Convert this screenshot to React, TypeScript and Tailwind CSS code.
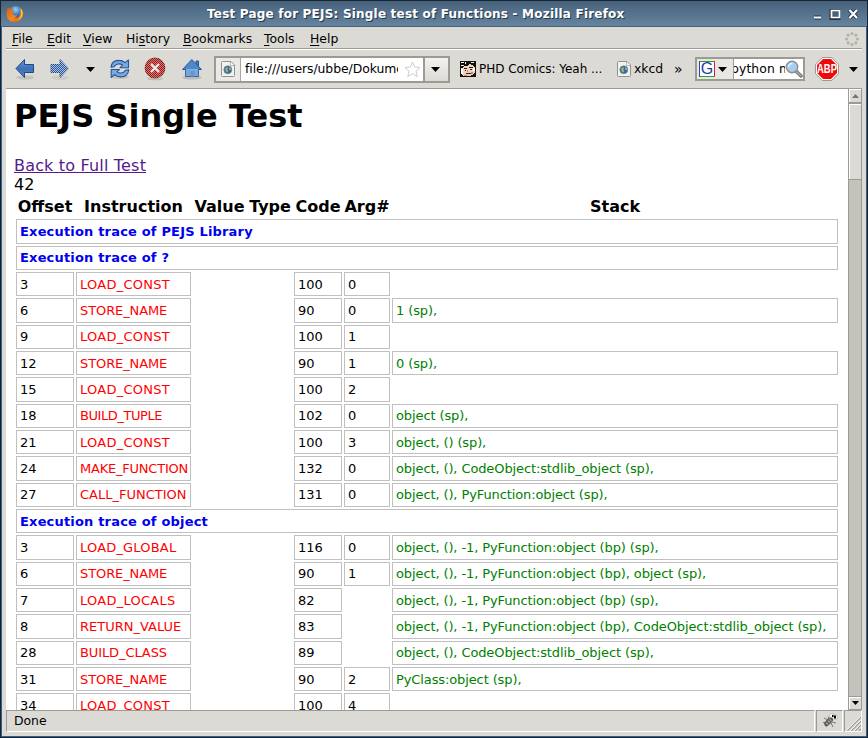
import React from "react";

type Row = { title?: string; c?: [string, string, string, string, string] };

const rows: Row[] = [
  { title: "Execution trace of PEJS Library" },
  { title: "Execution trace of ?" },
  { c: ["3", "LOAD_CONST", "100", "0", ""] },
  { c: ["6", "STORE_NAME", "90", "0", "1 (sp),"] },
  { c: ["9", "LOAD_CONST", "100", "1", ""] },
  { c: ["12", "STORE_NAME", "90", "1", "0 (sp),"] },
  { c: ["15", "LOAD_CONST", "100", "2", ""] },
  { c: ["18", "BUILD_TUPLE", "102", "0", "object (sp),"] },
  { c: ["21", "LOAD_CONST", "100", "3", "object, () (sp),"] },
  { c: ["24", "MAKE_FUNCTION", "132", "0", "object, (), CodeObject:stdlib_object (sp),"] },
  { c: ["27", "CALL_FUNCTION", "131", "0", "object, (), PyFunction:object (sp),"] },
  { title: "Execution trace of object" },
  { c: ["3", "LOAD_GLOBAL", "116", "0", "object, (), -1, PyFunction:object (bp) (sp),"] },
  { c: ["6", "STORE_NAME", "90", "1", "object, (), -1, PyFunction:object (bp), object (sp),"] },
  { c: ["7", "LOAD_LOCALS", "82", "", "object, (), -1, PyFunction:object (bp) (sp),"] },
  { c: ["8", "RETURN_VALUE", "83", "", "object, (), -1, PyFunction:object (bp), CodeObject:stdlib_object (sp),"] },
  { c: ["28", "BUILD_CLASS", "89", "", "object, (), CodeObject:stdlib_object (sp),"] },
  { c: ["31", "STORE_NAME", "90", "2", "PyClass:object (sp),"] },
  { c: ["34", "LOAD_CONST", "100", "4", ""] },
];

const opTracking: Record<string, string> = {
  LOAD_CONST: "tracking-[0.26px]",
  LOAD_LOCALS: "tracking-[0.26px]",
  LOAD_GLOBAL: "tracking-[0.18px]",
  STORE_NAME: "tracking-[-0.1px]",
  BUILD_TUPLE: "tracking-[-0.42px]",
  BUILD_CLASS: "tracking-[-0.1px]",
  MAKE_FUNCTION: "tracking-[-0.22px]",
};

const gridCols = "grid grid-cols-[58px_115px_53px_44px_48px_46px_446px] gap-x-[2px]";

function Cell({ text, color = "text-black" }: { text: string; color?: string }) {
  return (
    <div
      className={`flex h-[24.33px] items-center whitespace-nowrap border pl-[3px] text-[13px] leading-[15px] ${
        text ? "border-[#c0c0c0]" : "border-transparent"
      } ${color}`}
    >
      {text}
    </div>
  );
}

function Caret({ className = "" }: { className?: string }) {
  return (
    <svg className={`h-[5px] w-[9px] shrink-0 ${className}`} viewBox="0 0 9 5">
      <path d="M0 0h9L4.5 5z" fill="#000" />
    </svg>
  );
}

function FirefoxLogo() {
  return (
    <svg className="h-[18px] w-[18px]" viewBox="0 0 18 18">
      <defs>
        <radialGradient id="globe" cx="50%" cy="25%" r="75%">
          <stop offset="0" stopColor="#8fd4f4" />
          <stop offset=".5" stopColor="#3878bd" />
          <stop offset="1" stopColor="#14316f" />
        </radialGradient>
        <linearGradient id="fox" x1="0" y1="0" x2="1" y2="1">
          <stop offset="0" stopColor="#d65a1c" />
          <stop offset=".55" stopColor="#f08a24" />
          <stop offset="1" stopColor="#d34813" />
        </linearGradient>
      </defs>
      <circle cx="9.5" cy="8.3" r="7.4" fill="url(#globe)" />
      <path d="M2 2.2 4.4 4 7 4.2 8.5 6.1 6.4 7.3 7 9.5c1.2 1.4 2.7 1 4 .4-.2 1.4-1.5 2.4-3.2 2.3 2.8 1.4 6.6-.2 6.6-4.6 0-2.2-.6-3.6-1.5-5 2.7 1.6 4.6 4.5 4.2 7.4-.6 3.8-3.9 6.9-8.2 7.1C4 17.3.5 13.9.5 9.3.5 6 1 4 2 2.2z" fill="url(#fox)" />
      <path d="M14.7 3.3c2.2 2.2 2.6 5.7 1.2 8.5-1.2 2.3-3.4 3.8-5.8 3.9 2.6-1 4.6-3 4.9-6 .2-2.3.3-4.5-.3-6.4z" fill="#fbd230" />
    </svg>
  );
}

function Arrow({ right }: { right?: boolean }) {
  return (
    <svg className="h-[24px] w-[22px] shrink-0" viewBox="0 0 22 24">
      <defs>
        <linearGradient id="blueArrow" x1="0" y1="0" x2="0" y2="1">
          <stop offset="0" stopColor="#6b9ad3" />
          <stop offset=".5" stopColor="#3c72b8" />
          <stop offset="1" stopColor="#5586c4" />
        </linearGradient>
        <pattern id="dither" width="2" height="2" patternUnits="userSpaceOnUse">
          <path d="M0 0h1v1h-1zM1 1h1v1h-1z" fill="#dcdad5" shapeRendering="crispEdges" />
        </pattern>
      </defs>
      <ellipse cx="11" cy="20.5" rx="9" ry="2" fill="#a7a5a0" opacity=".45" />
      {right ? (
        <>
          <path d="M19.5 11.5 11 2.5V7.5H2V15.5H11V20.5z" fill="#1f5aae" stroke="#123c86" />
          <path d="M1 1h20v21H1z" fill="url(#dither)" opacity=".8" shapeRendering="crispEdges" />
        </>
      ) : (
        <path d="M2 11.5 10.5 2.5V7.5H19.5V15.5H10.5V20.5z" fill="url(#blueArrow)" stroke="#1d478d" />
      )}
    </svg>
  );
}

function Reload() {
  return (
    <svg className="h-[22px] w-[22px] shrink-0" viewBox="0 0 22 22">
      <ellipse cx="11" cy="19" rx="9" ry="2" fill="#a7a5a0" opacity=".4" />
      <g fill="#78a8dd" stroke="#24559c" strokeWidth="1.1" strokeLinejoin="round">
        <path d="M2 9.2C2.6 4.6 5.7 2.3 10 2.4c2.4 0 4.4.8 5.9 2.2L19.5 2v7.7h-8.4L13.6 7C11 5.3 7 5.4 5 8.6z" />
        <path d="M19.8 11.7c-.6 4.7-3.9 7.3-8.3 7.2-2.5 0-4.5-.8-5.9-2.3L2.2 19.5v-8h8.2l-2.5 2.4c2.6 2 6.5 1.6 8.5-1.5z" />
      </g>
    </svg>
  );
}

function Stop() {
  return (
    <svg className="h-[24px] w-[22px] shrink-0" viewBox="0 0 22 24">
      <ellipse cx="11" cy="21.5" rx="8" ry="1.8" fill="#9b9994" opacity=".5" />
      <circle cx="11" cy="11" r="9.8" fill="#ac1414" stroke="#7d0e0e" strokeWidth="1.2" />
      <path d="M0 0h22v22H0z" fill="url(#dither)" opacity=".55" shapeRendering="crispEdges" />
      <path d="M7 7l8 8M15 7l-8 8" stroke="#f4ecea" strokeWidth="2.2" />
    </svg>
  );
}

function Home() {
  return (
    <svg className="h-[22px] w-[22px] shrink-0" viewBox="0 0 22 22">
      <ellipse cx="11" cy="19.5" rx="9.5" ry="2" fill="#9b9994" opacity=".5" />
      <path d="M4.5 10v8.5h13V10z" fill="#78a6da" stroke="#3567a8" />
      <path d="M15 3h2.5v5H15z" fill="#4d7fbd" stroke="#285899" />
      <path d="M1.5 11.5 10.8 1.5 20.5 11.5z" fill="#4f88c9" stroke="#28599d" strokeLinejoin="round" />
      <path d="M5 11.5h12" stroke="#82b0e1" />
      <path d="M9.5 13h4v5.5h-4z" fill="#6797cd" />
    </svg>
  );
}

function PageIcon() {
  return (
    <svg className="h-[16px] w-[14px] shrink-0" viewBox="0 0 14 16">
      <path d="M.5 1.5q0-1 1-1H10L13.5 4v10.5q0 1-1 1h-11q-1 0-1-1z" fill="#f2f2f0" stroke="#90928d" />
      <path d="M9.5 1v3.5H13" fill="#fff" stroke="#b7b8b4" />
      <circle cx="6.8" cy="8.8" r="4" fill="#3564a0" stroke="#6f8db3" strokeWidth=".7" />
      <path d="M4 7.5 6.2 6l1 1.2-1 1.3L7.5 10 6 11.7 4.6 10zM8.3 5.8l1.7 1.6-.4 2-1.7-1z" fill="#a0b858" />
    </svg>
  );
}

function Comic() {
  return (
    <svg className="h-[16px] w-[16px] shrink-0" viewBox="0 0 16 16" shapeRendering="crispEdges">
      <path d="M0 0h16v16H0z" fill="#111" />
      <path d="M1 7h2l1-2h3l2-2 4 1 2 3v5l-3 2-3 1H4l-3-2z" fill="#eed2bd" />
      <path d="M1 1h3v1H1zM5 1h1v2H5zM1 4h3v1H1zM11 1h3v1h-3z" fill="#f3f0e9" />
      <path d="M1 8h2v5H1zM13 7h2v3h-2z" fill="#fff" />
      <path d="M4 7h3v1H4zM9 6h4v1H9zM5 9h1v1H5zM10 8h2v1h-2zM6 12h5v1H6z" fill="#262020" />
      <path d="M7 9h1v2H7zM4 14h3v1H4zM11 11h2v2h-2z" fill="#c38b74" />
    </svg>
  );
}

function Bug() {
  return (
    <svg className="h-[16px] w-[16px]" viewBox="0 0 16 16">
      <path d="M2 5l4 2M1 9.5h4M4 14l2-3M6 3.5l1 3M9 10l2 4M10 9l4 1" stroke="#6b6b69" strokeWidth=".9" />
      <ellipse cx="6.6" cy="8.8" rx="5" ry="2.3" transform="rotate(-43 6.6 8.8)" fill="#686865" stroke="#4b4b47" strokeWidth=".7" />
      <path d="M4 10l2 1M6 8l2 1M7.5 6.3l2 1.5" stroke="#b9b9b3" />
      <circle cx="9.5" cy="2.6" r="1.9" fill="#fff" stroke="#999" strokeWidth=".5" />
      <circle cx="13" cy="4.2" r="2.4" fill="#fff" stroke="#999" strokeWidth=".5" />
      <path d="M10 2h1.5v2H10zM12 2.5h2v3h-2z" fill="#000" />
    </svg>
  );
}

function Menu({ first, rest, className }: { first: React.ReactNode; rest: string; className: string }) {
  return (
    <div className={`shrink-0 whitespace-nowrap ${className}`}>
      {first}
      {rest}
    </div>
  );
}

const U = ({ children }: { children: string }) => (
  <span className="underline decoration-1 underline-offset-2">{children}</span>
);

export default function App() {
  return (
    <div className="flex h-[738px] w-[868px] flex-col overflow-hidden border border-[#182330] bg-[#dcdad5] font-['DejaVu_Sans',sans-serif] text-[12px] text-black">
      <div className="flex h-[26px] shrink-0 items-center border-b border-[#4a6074] bg-linear-to-b from-[#46617a] to-[#6684a0] pl-[5px] pr-[8px]">
        <FirefoxLogo />
        <div className="flex-1 pl-[183px] pt-[1px] text-[12px] font-bold leading-[16px] tracking-[0.2px] text-white [text-shadow:1px_1px_0_#263747]">
          <span className="inline-block w-[424px] whitespace-nowrap">Test Page for PEJS: Single test of Functions - Mozilla Firefox</span>
        </div>
        <svg className="h-[12px] w-[46px]" viewBox="0 0 46 12" fill="none">
          <path d="M1 9.5h7M18.5 3v7h7V3z" stroke="#223343" strokeWidth="4" />
          <path d="M1 9.5h7" stroke="#fff" strokeWidth="2" />
          <path d="M18.5 2.5h8v7h-8z" fill="#46617a" stroke="#fff" strokeWidth="1.7" />
          <path d="M36.5 2l7.5 8M44 2l-7.5 8" stroke="#223343" strokeWidth="4" />
          <path d="M36.5 2l7.5 8M44 2l-7.5 8" stroke="#fff" strokeWidth="2.2" />
        </svg>
      </div>

      <div className="flex min-h-0 flex-1 flex-col border-x border-b border-[#36608a]">
        <div className="mx-[4px] flex h-[22px] shrink-0 items-center border-b border-[#9c9a93] pl-[6px] pr-[3px] pt-[2px] text-[12.4px] leading-[16px]">
          <Menu className="w-[35px]" first={<U>F</U>} rest="ile" />
          <Menu className="w-[36px]" first={<U>E</U>} rest="dit" />
          <Menu className="w-[43px]" first={<U>V</U>} rest="iew" />
          <Menu className="w-[57px]" first={<>Hi<U>s</U></>} rest="tory" />
          <Menu className="w-[81px]" first={<U>B</U>} rest="ookmarks" />
          <Menu className="w-[46px]" first={<U>T</U>} rest="ools" />
          <Menu className="flex-1" first={<U>H</U>} rest="elp" />
          <svg className="h-[14px] w-[14px]" viewBox="0 0 14 14">
            {[0, 45, 90, 135, 180, 225, 270, 315].map((a) => (
              <circle key={a} cx="7" cy="1.5" r="1.5" fill="#b3b0aa" transform={`rotate(${a} 7 7)`} />
            ))}
          </svg>
        </div>

        <div className="mx-[4px] flex h-[40px] shrink-0 items-center border-b border-t border-b-[#9c9a93] border-t-white pl-[8px] text-[12px]">
          <Arrow />
          <div className="w-[13px]" />
          <Arrow right />
          <Caret className="ml-[15px]" />
          <div className="w-[14px]" />
          <Reload />
          <div className="w-[13px]" />
          <Stop />
          <div className="w-[15px]" />
          <Home />
          <div className="ml-[11px] flex h-[27px] w-[236px] shrink-0 border-2 border-[#9c9a93]">
            <div className="flex w-[25px] items-center justify-center border-r border-[#aaa79f] bg-[#eae9e6]">
              <PageIcon />
            </div>
            <div className="flex w-[182px] items-center bg-white pl-[4px]">
              <div className="w-[153px] overflow-hidden whitespace-nowrap text-[12.4px] leading-[18px] tracking-[-0.05px]">file:///users/ubbe/Dokume</div>
              <svg className="ml-[6px] h-[17px] w-[17px] shrink-0" viewBox="0 0 17 17">
                <path d="M8.5 1l2.2 5 5.3.5-4 3.6 1.2 5.5-4.7-2.9-4.7 2.9L5 10.1 1 6.5 6.3 6z" fill="#fff" stroke="#cecece" />
              </svg>
            </div>
            <div className="flex flex-1 items-center justify-center border-l-2 border-[#9c9a93] bg-linear-to-b from-[#f3f2f0] to-[#dcdad5] pr-[3px]">
              <Caret />
            </div>
          </div>
          <div className="ml-[10px] flex w-[157px] shrink-0 items-center whitespace-nowrap">
            <Comic />
            <span className="ml-[3px] tracking-[-0.04px]">PHD Comics: Yeah ...</span>
          </div>
          <PageIcon />
          <span className="ml-[3px] w-[40px] shrink-0 text-[12.4px]">xkcd</span>
          <span className="w-[21px] shrink-0 text-[14px]">»</span>
          <div className="flex h-[24px] w-[110px] shrink-0 items-center border-2 border-[#9c9a93] bg-white">
            <div className="flex h-full w-[37px] shrink-0 items-center border-r border-[#9c9a93] bg-[#e8e7e3] pl-[2px]">
              <div className="flex h-[16px] w-[16px] items-center justify-center border border-b-[#22a52a] border-l-[#2448bf] border-r-[#d71e1e] border-t-[#22a52a] bg-white font-['Liberation_Sans',sans-serif] text-[16px] leading-[14px] text-[#173fa5]">
                G
              </div>
              <Caret className="ml-[3px]" />
            </div>
            <div className="flex h-[18px] w-[51px] shrink-0 overflow-hidden whitespace-nowrap text-[12.4px] leading-[18px]">
              <span className="-ml-[3px] shrink-0 tracking-[0.1px]">python m</span>
            </div>
            <svg className="h-[18px] w-[18px] shrink-0 bg-white" viewBox="0 0 18 18">
              <path d="M11 11l5 5" stroke="#777" strokeWidth="3.5" strokeLinecap="round" />
              <path d="M11 11l5 5" stroke="#aaa" strokeWidth="1.5" />
              <circle cx="7" cy="7" r="5.7" fill="#a9ccef" stroke="#858f98" strokeWidth="1.4" />
              <path d="M3.5 7c0-2 2-3.5 4-3.5" stroke="#e8f4ff" strokeWidth="1.5" fill="none" />
            </svg>
          </div>
          <svg className="ml-[10px] h-[24px] w-[24px] shrink-0" viewBox="0 0 24 24">
            <path d="M7.3.5h9.4l6.8 6.8v9.4l-6.8 6.8H7.3L.5 16.7V7.3z" fill="#fff" stroke="#999" />
            <path d="M8 2h8l6 6v8l-6 6H8l-6-6V8z" fill="#f00909" />
            <text x="12" y="16.3" fill="#fff" fontFamily="Liberation Sans, sans-serif" fontWeight="700" fontSize="12.5" textAnchor="middle" textLength="20" lengthAdjust="spacingAndGlyphs">ABP</text>
          </svg>
          <Caret className="ml-[10px]" />
        </div>

        <div className="mx-[4px] flex h-[621px] shrink-0 pr-0">
          <div className="w-[842px] shrink-0 overflow-hidden bg-white pl-[8px]">
            <h1 className="mt-[9px] h-[37px] text-[32px] font-bold leading-[37px]">PEJS Single Test</h1>
            <div className="mt-[21px] h-[19px] text-[16px] leading-[19px] tracking-[0.18px]">
              <a className="text-[#551a8b] underline">Back to Full Test</a>
            </div>
            <div className="h-[19px] text-[16px] leading-[19px]">42</div>
            <div className={`ml-[2px] ${gridCols} mt-[3px] h-[22.4px] text-center text-[16px] font-bold leading-[19px]`}>
              {["Offset", "Instruction", "Value", "Type", "Code", "Arg#", "Stack"].map((h) => (
                <div key={h} className="flex justify-center whitespace-nowrap">{h}</div>
              ))}
            </div>
            <div className="ml-[2px] flex flex-col gap-[2px]">
              {rows.map((r, i) =>
                r.title ? (
                  <div key={i} className="flex h-[24.33px] w-[822px] shrink-0 items-center border border-[#c0c0c0] pl-[3px] text-[13px] font-bold leading-[15px] tracking-[0.18px] text-[#0000ee]">
                    {r.title}
                  </div>
                ) : (
                  <div key={i} className={gridCols}>
                    <Cell text={r.c![0]} />
                    <Cell text={r.c![1]} color={`text-[#ff0000] ${opTracking[r.c![1]] ?? ""}`} />
                    <div />
                    <div />
                    <Cell text={r.c![2]} />
                    <Cell text={r.c![3]} />
                    <Cell text={r.c![4]} color="text-[#008000] tracking-[-0.11px]" />
                  </div>
                )
              )}
            </div>
          </div>
          <div className="flex w-[14px] shrink-0 flex-col border-x border-[#9c9a93] bg-[#c4c2bd]">
            <div className="flex h-[14px] shrink-0 items-center justify-center border-b border-[#9c9a93] bg-[#dcdad5] shadow-[inset_1px_1px_0_#fff]">
              <svg className="h-[4px] w-[7px]" viewBox="0 0 7 4"><path d="M0 4h7L3.5 0z" fill="#77756f" /></svg>
            </div>
            <div className="h-[77px] shrink-0 border-y border-[#9c9a93] bg-[#dcdad5] shadow-[inset_1px_1px_0_#fff]" />
            <div className="flex-1" />
            <div className="flex h-[14px] shrink-0 items-center justify-center border-y border-[#9c9a93] bg-[#dcdad5] shadow-[inset_1px_1px_0_#fff]">
              <svg className="h-[4px] w-[7px]" viewBox="0 0 7 4"><path d="M0 0h7L3.5 4z" fill="#000" /></svg>
            </div>
          </div>
        </div>

        <div className="mx-[4px] flex h-[22px] shrink-0 gap-[1px]">
          <div className="flex w-[809px] items-center border border-b-white border-l-[#9c9a93] border-r-white border-t-[#9c9a93] pl-[7px] text-[12.4px]">Done</div>
          <div className="flex w-[27px] items-center justify-center border border-b-white border-l-[#9c9a93] border-r-white border-t-[#9c9a93]"><Bug /></div>
          <div className="flex-1 border border-b-white border-l-[#9c9a93] border-r-white border-t-[#9c9a93]">
            <svg className="ml-[1px] mt-[6px] h-[14px] w-[15px]" viewBox="0 0 15 14">
              <path d="M1 14 15 0M5 14 15 4M9 14l6-6M13 14l2-2" stroke="#9c9a93" strokeWidth="1.4" />
              <path d="M0 14 14 0M4 14 15 3M8 14l7-7" stroke="#fff" strokeWidth=".8" />
            </svg>
          </div>
        </div>
      </div>
    </div>
  );
}
